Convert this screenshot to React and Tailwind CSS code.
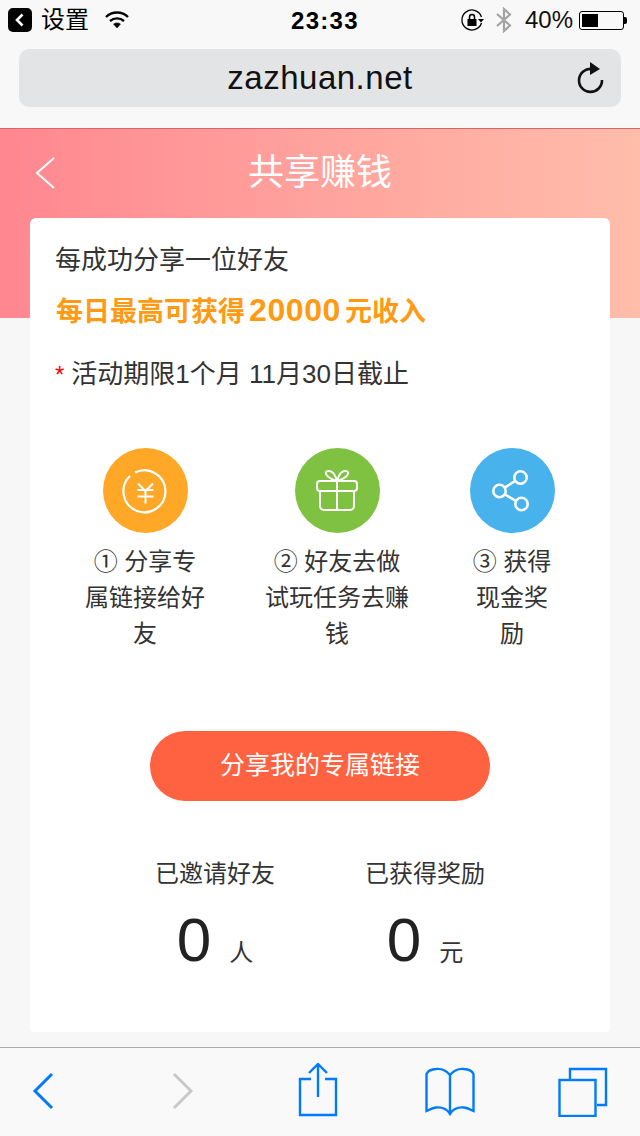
import React from 'react';

const cjk = { fontFamily: '"Liberation Sans", "Noto Sans CJK SC", sans-serif' };

const YenIcon = () => (
    <svg width="46" height="46" viewBox="0 0 46 46" fill="none" stroke="#fff" strokeWidth="2">
        <path d="M13 4.5 A21 21 0 1 1 8 8" strokeWidth="2.2" />
        <path d="M16 15.5 L23.5 23 L31 15.5 M15.5 22 H31.5 M15.5 28.5 H31.5 M23.5 23 V35.5" />
    </svg>
);

const GiftIcon = () => (
    <svg width="44" height="44" viewBox="0 0 44 44" fill="none" stroke="#fff" strokeWidth="2" strokeLinejoin="round">
        <rect x="2" y="12" width="40" height="10" rx="3" />
        <path d="M5 22 V37 a4 4 0 0 0 4 4 H35 a4 4 0 0 0 4 -4 V22 M22 12 V41" />
        <path d="M22 12 C18 11 12 8 11 5 C10 2 14 1 17 3 C20 5 21 9 22 12 C23 9 24 5 27 3 C30 1 34 2 33 5 C32 8 26 11 22 12 Z" />
    </svg>
);

const ShareIcon = () => (
    <svg width="40" height="46" viewBox="0 0 40 46" fill="none" stroke="#fff" strokeWidth="2.6">
        <circle cx="28.5" cy="9.5" r="6.2" />
        <circle cx="7.5" cy="23" r="6.2" />
        <circle cx="29.5" cy="36" r="6.2" />
        <path d="M13 19.5 L23 13 M13 26.5 L24 33" />
    </svg>
);

const Step = ({ color, icon, lines, className }) => (
    <div className={`flex flex-col items-center ${className}`}>
        <div className={`w-[85px] h-[85px] rounded-full flex items-center justify-center ${color}`}>{icon}</div>
        <div className="mt-[11px] text-[24px] leading-[36px] text-[#333] text-center">
            {lines.map((l) => <div key={l}>{l}</div>)}
        </div>
    </div>
);

const Stat = ({ label, unit }) => (
    <div className="flex flex-col items-center w-[210px]">
        <div className="text-[24px] leading-[36px] text-[#333]">{label}</div>
        <div className="flex items-baseline mt-[10px] h-[76px]">
            <span className="text-[62px] leading-[76px] text-[#222]">0</span>
            <span className="text-[24px] ml-[18px] text-[#333]">{unit}</span>
        </div>
    </div>
);

const App = () => {
    return (
        <div className="w-[640px] h-[1136px] bg-[#f7f7f7] flex flex-col overflow-hidden" style={cjk}>
            {/* safari chrome */}
            <div className="h-[128px] shrink-0 bg-[#f8f8f8] px-[8px] flex flex-col">
                <div className="h-[40px] flex items-center text-black relative">
                    <svg width="24" height="24" viewBox="0 0 24 24">
                        <rect width="24" height="24" rx="5" fill="#000" />
                        <path d="M14.5 6.5 L9 12 L14.5 17.5" fill="none" stroke="#fff" strokeWidth="2.6" />
                    </svg>
                    <span className="ml-[9px] text-[24px]">设置</span>
                    <svg className="ml-[16px]" width="24" height="18" viewBox="0 0 24 18" fill="none" stroke="#000" strokeWidth="2.4">
                        <path d="M1 6 C7 0 17 0 23 6 M5 10 C9 6.5 15 6.5 19 10" />
                        <path d="M8.5 13 C10.5 11.5 13.5 11.5 15.5 13 L12 17 Z" fill="#000" strokeWidth="0.5" />
                    </svg>
                    <span className="absolute left-[283px] top-[7px] text-[24px] font-bold leading-[28px] tracking-[1.3px]">23:33</span>
                    <div className="ml-auto flex items-center">
                        <svg width="24" height="24" viewBox="0 0 24 24" fill="none" stroke="#000" strokeWidth="1.3">
                            <path d="M21.5 9 A10 10 0 1 0 21.5 15" />
                            <rect x="7.5" y="11" width="9" height="7" fill="#000" stroke="none" />
                            <path d="M9.5 11 V9 a2.5 2.5 0 0 1 5 0 V11" strokeWidth="1.5" />
                            <path d="M18 11 H24 L21 14.5 Z" fill="#000" stroke="none" />
                        </svg>
                        <svg className="ml-[12px]" width="16" height="26" viewBox="0 0 16 26" fill="none" stroke="#a3a3a3" strokeWidth="2.2">
                            <path d="M1 7 L14 18.5 L8 24 V2 L14 7.5 L1 19" />
                        </svg>
                        <span className="ml-[13px] text-[24px] leading-[28px] text-[#111]">40%</span>
                        <div className="ml-[6px] w-[45px] h-[19px] border border-black rounded-[3px] p-[2px]">
                            <div className="w-[16px] h-full bg-black" />
                        </div>
                        <div className="w-[3px] h-[7px] bg-black rounded-r-[2px] mr-[5px]" />
                    </div>
                </div>
                <div className="mx-[11px] mt-[9px] h-[58px] rounded-[10px] bg-[#e3e4e6] flex items-center justify-center relative">
                    <span className="text-[33px] text-[#111] tracking-[0.5px]">zazhuan.net</span>
                    <svg className="absolute right-[14px] top-[12px]" width="32" height="34" viewBox="0 0 32 34" fill="none" stroke="#111" strokeWidth="2.6">
                        <path d="M17 8 A11.5 11.5 0 1 0 27 19" />
                        <path d="M15 1 L25 8 L15 14 Z" fill="#111" stroke="none" />
                    </svg>
                </div>
            </div>

            {/* page */}
            <div className="flex-1 relative">
                <div className="h-[190px] border-t border-[#d9646a] bg-gradient-to-r from-[#ff8790] to-[#ffbdaa] relative flex justify-center pt-[20px]">
                    <svg className="absolute left-[34px] top-[27px]" width="22" height="34" viewBox="0 0 22 34" fill="none" stroke="#fff" strokeWidth="2">
                        <path d="M20 2 L3 17 L20 32" />
                    </svg>
                    <span className="text-[36px] leading-[48px] text-white">共享赚钱</span>
                </div>
                <div className="absolute left-[30px] top-[90px] w-[580px] h-[814px] bg-white rounded-t-[6px] rounded-b-[4px] flex flex-col">
                    <div className="pl-[25px] pt-[24px] text-[26px] leading-[36px] text-[#333]">每成功分享一位好友</div>
                    <div className="pl-[26px] mt-[14px] text-[27px] leading-[36px] font-bold text-[#ff9a12] flex items-baseline">
                        每日最高可获得
                        <span className="text-[32px] ml-[4px] mr-[4px] tracking-[0.6px]">20000</span>
                        元收入
                    </div>
                    <div className="pl-[25px] mt-[26px] text-[26px] leading-[36px] text-[#333]">
                        <span className="text-[#f00] text-[24px] mr-[7px]">*</span>活动期限1个月 11月30日截止
                    </div>
                    <div className="flex mt-[55px] pl-[36px]">
                        <Step
                            className="w-[158px]"
                            color="bg-[#ffa726]"
                            icon={<YenIcon />}
                            lines={['① 分享专', '属链接给好', '友']}
                        />
                        <Step
                            className="w-[158px] ml-[34px]"
                            color="bg-[#7fc241]"
                            icon={<GiftIcon />}
                            lines={['② 好友去做', '试玩任务去赚', '钱']}
                        />
                        <Step
                            className="w-[100px] ml-[46px]"
                            color="bg-[#47b2ec]"
                            icon={<ShareIcon />}
                            lines={['③ 获得', '现金奖', '励']}
                        />
                    </div>
                    <button className="self-center mt-[79px] w-[340px] h-[70px] rounded-full bg-[#ff6240] text-white text-[25px]">
                        分享我的专属链接
                    </button>
                    <div className="flex justify-center mt-[55px]">
                        <Stat label="已邀请好友" unit="人" />
                        <Stat label="已获得奖励" unit="元" />
                    </div>
                </div>
            </div>

            {/* bottom toolbar */}
            <div className="h-[89px] shrink-0 bg-[#f9f9f9] border-t border-[#adadad] flex items-center relative">
                <svg className="ml-[32px] -mt-[2px]" width="22" height="38" viewBox="0 0 22 38" fill="none" stroke="#007aff" strokeWidth="3">
                    <path d="M20 2 L3 19 L20 36" />
                </svg>
                <svg className="ml-[118px] -mt-[2px]" width="22" height="38" viewBox="0 0 22 38" fill="none" stroke="#c9c9c9" strokeWidth="3">
                    <path d="M2 2 L19 19 L2 36" />
                </svg>
                <svg className="ml-[104px] -mt-[5px]" width="40" height="54" viewBox="0 0 40 54" fill="none" stroke="#007aff" strokeWidth="2.4">
                    <path d="M13 16 H2 V52 H38 V16 H27 M20 34 V2 M11 10 L20 1 L29 10" />
                </svg>
                <svg className="ml-[87px]" width="50" height="50" viewBox="0 0 50 50" fill="none" stroke="#007aff" strokeWidth="2.4">
                    <path d="M25 8 C21 3 16 1.5 11 2 C7 2.2 3 4 1.5 7 V44 C4 43 7 41 11 40.5 C17 40 22 42 25 47 C28 42 33 40 39 40.5 C43 41 46 43 48.5 44 V7 C47 4 43 2.2 39 2 C34 1.5 29 3 25 8 V47" />
                </svg>
                <svg className="ml-[83px]" width="50" height="50" viewBox="0 0 50 50" fill="none" stroke="#007aff" strokeWidth="2.4">
                    <path d="M12 12 V2 H48 V38 H39" />
                    <rect x="1.5" y="13" width="36" height="36" />
                </svg>
            </div>
        </div>
    );
};

export default App;
